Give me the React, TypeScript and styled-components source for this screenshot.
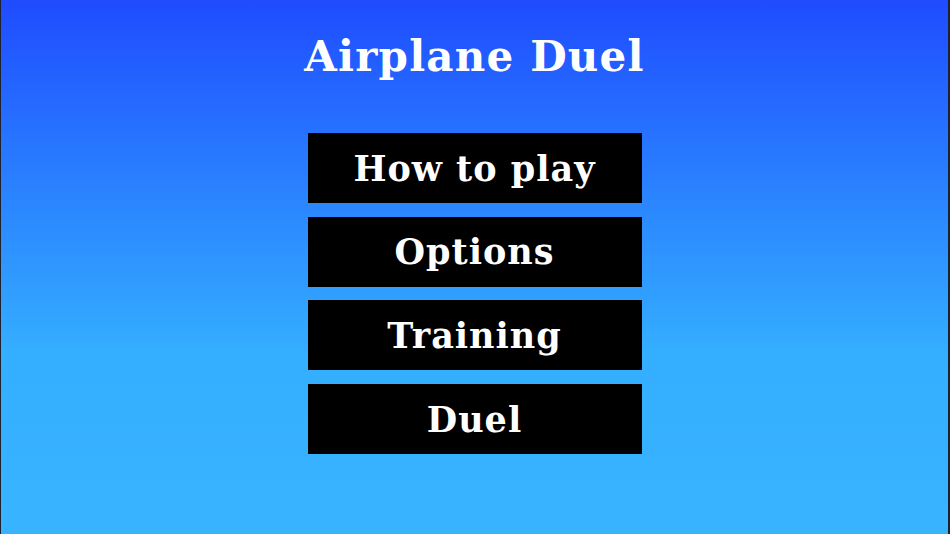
import React from "react";
import styled, { createGlobalStyle } from "styled-components";

const GlobalStyle = createGlobalStyle`
  html, body {
    margin: 0;
    padding: 0;
    height: 100%;
  }
  #root {
    height: 100%;
  }
`;

const Screen = styled.div`
  box-sizing: border-box;
  height: 534px;
  width: 950px;
  display: flex;
  flex-direction: column;
  align-items: center;
  border-left: 1px solid #1c2230;
  border-right: 2px solid #1c2230;
  background: linear-gradient(
    to bottom,
    #1f4cff 0%,
    #2b86ff 38%,
    #34aeff 66%,
    #38b4ff 100%
  );
  font-family: "DejaVu Serif", "Liberation Serif", serif;
  font-weight: bold;
  color: #fff;
`;

const Title = styled.h1`
  margin: 30px 0 0;
  height: 54px;
  line-height: 54px;
  font-size: 42px;
  font-weight: bold;
  letter-spacing: 1.2px;
`;

const Menu = styled.nav`
  display: flex;
  flex-direction: column;
  gap: 13.7px;
  margin-top: 49px;
`;

const MenuButton = styled.button`
  width: 334px;
  height: 70px;
  border: none;
  background: #000;
  color: #fff;
  font-family: inherit;
  font-weight: bold;
  font-size: 35px;
  letter-spacing: 1px;
  cursor: pointer;
  padding: 0;
`;

const items = ["How to play", "Options", "Training", "Duel"];

export default function App() {
  return (
    <>
      <GlobalStyle />
      <Screen>
        <Title>Airplane Duel</Title>
        <Menu>
          {items.map((label) => (
            <MenuButton key={label}>{label}</MenuButton>
          ))}
        </Menu>
      </Screen>
    </>
  );
}
